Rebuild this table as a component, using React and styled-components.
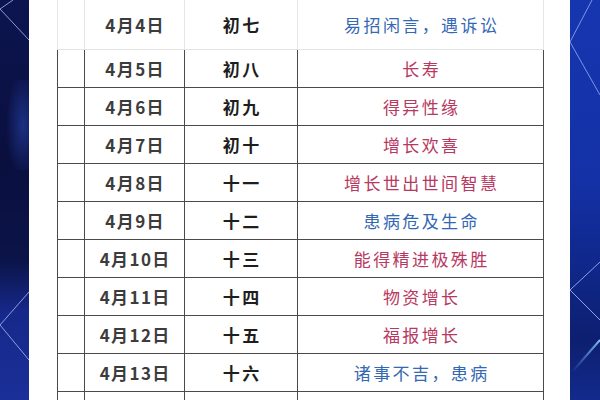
import React from "react";
import styled, { createGlobalStyle } from "styled-components";

const GlobalStyle = createGlobalStyle`
  html, body {
    margin: 0;
    padding: 0;
    overflow: hidden;
    background: #ffffff;
  }
  * {
    box-sizing: border-box;
  }
`;

const Page = styled.div`
  display: flex;
  width: 600px;
  height: 400px;
  overflow: hidden;
  font-family: "Noto Sans CJK SC", "Noto Sans", sans-serif;
`;

const Band = styled.div`
  width: ${(p) => p.$width}px;
  flex-shrink: 0;
  height: 100%;
  background: ${(p) => p.$bg};
  svg {
    display: block;
  }
`;

const Sheet = styled.div`
  flex: 1;
  background: #ffffff;
  padding-left: 28px;
  overflow: hidden;
`;

const Row = styled.div`
  display: grid;
  grid-template-columns: 27px 100px 113px 246px;
  width: 487px;
  height: ${(p) => (p.$first ? 50 : 38)}px;
  border-left: 1px solid ${(p) => (p.$first ? "#e6e6e6" : "#4a4a4a")};
  border-bottom: 1px solid ${(p) => (p.$first ? "#e3e3e3" : "#4a4a4a")};
  padding-bottom: ${(p) => (p.$first ? 3 : 0)}px;
`;

const Cell = styled.div`
  display: flex;
  align-items: center;
  justify-content: center;
  border-right: 1px solid ${(p) => (p.$first ? "#e6e6e6" : "#4a4a4a")};
  margin-bottom: ${(p) => (p.$first ? -3 : 0)}px;
  white-space: nowrap;
`;

const DateText = styled.span`
  font-size: 17px;
  font-weight: 700;
  color: #3c3c3c;
  letter-spacing: 1.4px;
  padding-left: 1.4px;
`;

const LunarText = styled.span`
  font-size: 17px;
  font-weight: 700;
  color: #1e1e1e;
  letter-spacing: 2.5px;
  padding-left: 2.5px;
`;

const NoteText = styled.span`
  font-size: 17px;
  color: ${(p) => (p.$tone === "blue" ? "#3468b4" : "#b8395f")};
  letter-spacing: 2.4px;
  padding-left: 2.4px;
`;

const rows = [
  ["4月4日", "初七", "易招闲言，遇诉讼", "blue"],
  ["4月5日", "初八", "长寿", "red"],
  ["4月6日", "初九", "得异性缘", "red"],
  ["4月7日", "初十", "增长欢喜", "red"],
  ["4月8日", "十一", "增长世出世间智慧", "red"],
  ["4月9日", "十二", "患病危及生命", "blue"],
  ["4月10日", "十三", "能得精进极殊胜", "red"],
  ["4月11日", "十四", "物资增长", "red"],
  ["4月12日", "十五", "福报增长", "red"],
  ["4月13日", "十六", "诸事不吉，患病", "blue"],
  ["4月14日", "十七", "饮食不节，易生病", "red"],
];

const LeftDeco = () => (
  <svg width="29" height="400" viewBox="0 0 29 400">
    <defs>
      <radialGradient id="glowL" cx="0.8" cy="0.5" r="0.6">
        <stop offset="0" stopColor="#2a4bb8" stopOpacity="0.55" />
        <stop offset="1" stopColor="#2a4bb8" stopOpacity="0" />
      </radialGradient>
    </defs>
    <rect x="0" y="80" width="29" height="90" fill="url(#glowL)" />
    <polyline points="13,0 0,9 29,40" fill="none" stroke="#8c9ad6" strokeWidth="1" />
    <polyline points="29,292 0,325 29,360" fill="none" stroke="#8fa0e0" strokeWidth="1" />
  </svg>
);

const RightDeco = () => (
  <svg width="30" height="400" viewBox="0 0 30 400">
    <defs>
      <linearGradient id="streak" x1="0" y1="0" x2="1" y2="0">
        <stop offset="0" stopColor="#6fb6ff" stopOpacity="0" />
        <stop offset="1" stopColor="#8fd0ff" stopOpacity="0.9" />
      </linearGradient>
    </defs>
    <polyline points="22,0 0,42 30,95" fill="none" stroke="#7f95e6" strokeWidth="1" />
    <polyline points="30,262 0,290 30,320" fill="none" stroke="#8ea2ee" strokeWidth="1" />
    <line x1="2" y1="372" x2="30" y2="340" stroke="url(#streak)" strokeWidth="2" />
  </svg>
);

export default function App() {
  return (
    <>
      <GlobalStyle />
      <Page>
        <Band
          $width={29}
          $bg="linear-gradient(180deg, #0c1550 0%, #0a0f3e 40%, #0b1448 65%, #16288a 78%, #1a2f98 100%)"
        >
          <LeftDeco />
        </Band>
        <Sheet>
          {rows.map(([date, lunar, note, tone], i) => (
            <Row key={date} $first={i === 0}>
              <Cell $first={i === 0} />
              <Cell $first={i === 0}>
                <DateText>{date}</DateText>
              </Cell>
              <Cell $first={i === 0}>
                <LunarText>{lunar}</LunarText>
              </Cell>
              <Cell $first={i === 0}>
                <NoteText $tone={tone}>{note}</NoteText>
              </Cell>
            </Row>
          ))}
        </Sheet>
        <Band
          $width={30}
          $bg="linear-gradient(180deg, #1636b0 0%, #1431a6 45%, #0f2686 70%, #0d1f70 85%, #132a8c 100%)"
        >
          <RightDeco />
        </Band>
      </Page>
    </>
  );
}
